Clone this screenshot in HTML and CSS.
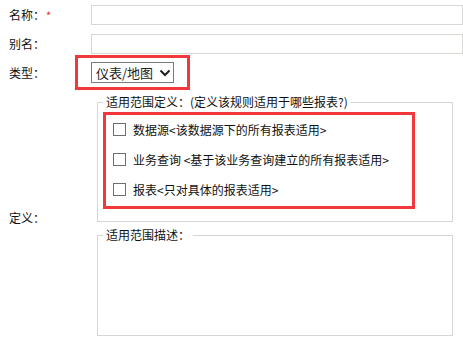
FILE: index.html
```html
<!DOCTYPE html>
<html lang="zh-CN">
<head>
    <meta charset="UTF-8">
    <title>规则定义</title>
    <link rel="stylesheet" href="styles.css">
</head>
<body>
    <div class="form">
        <div class="row">
            <label class="label">名称：<span class="star">*</span></label>
            <input class="text-input" type="text">
        </div>
        <div class="row row-gap">
            <label class="label">别名：</label>
            <input class="text-input" type="text">
        </div>
        <div class="row">
            <label class="label">类型：</label>
            <!-- 红框标注 -->
            <div class="mark mark-type">
                <div class="select">
                    <span>仪表/地图</span>
                    <svg width="12" height="8" viewBox="0 0 12 8"><path d="M1.5 1.5 L6 6 L10.5 1.5" fill="none" stroke="#1f1f1f" stroke-width="2"/></svg>
                </div>
            </div>
        </div>
        <div class="row row-def">
            <label class="label">定义：</label>
            <div class="scope">
                <fieldset class="box">
                    <legend>适用范围定义：(定义该规则适用于哪些报表?)</legend>
                    <div class="mark check-list">
                        <label class="check"><span class="checkbox"></span>数据源&lt;该数据源下的所有报表适用&gt;</label>
                        <label class="check"><span class="checkbox"></span>业务查询 &lt;基于该业务查询建立的所有报表适用&gt;</label>
                        <label class="check"><span class="checkbox"></span>报表&lt;只对具体的报表适用&gt;</label>
                    </div>
                </fieldset>
                <fieldset class="box box-desc">
                    <legend>适用范围描述：</legend>
                    <div class="desc"></div>
                </fieldset>
            </div>
        </div>
    </div>
</body>
</html>
```

FILE: styles.css
```css
/* 基本样式 */
html, body {
    margin: 0;
    background: #fff;
}

body {
    font-family: "Noto Sans CJK SC", "Microsoft YaHei", sans-serif;
    font-size: 12px;
    line-height: 16px;
    color: #111;
}

.form {
    padding-top: 5px;
}

.row {
    display: flex;
    align-items: center;
}

.row-gap {
    margin-top: 9px;
    margin-bottom: 1px;
}

.label {
    width: 91px;
    flex: none;
    padding-left: 9px;
    box-sizing: border-box;
}

.star {
    color: #e8262c;
    font-size: 11px;
    margin-left: 1px;
    vertical-align: top;
}

.text-input {
    box-sizing: border-box;
    width: 372px;
    height: 20px;
    margin: 0;
    border: 1px solid #d8d8d3;
    outline: none;
}

/* 红框标注 */
.mark {
    border: 3px solid #f2383a;
}

.mark-type {
    margin-left: -16px;
    padding: 4px 13px;
}

.select {
    box-sizing: border-box;
    width: 83px;
    height: 21px;
    display: flex;
    align-items: center;
    padding-left: 4px;
    border: 1px solid #7a7a7a;
    font-size: 13px;
    color: #222;
}

.select svg {
    margin-left: 6px;
}

/* 定义区域 */
.scope {
    width: 356px;
    margin-left: 6px;
    padding-top: 4px;
    padding-bottom: 10px;
}

.box {
    margin: 0;
    padding: 0 0 12px 5px;
    border: 1px solid #d6d6d6;
}

.box legend {
    padding: 0 3px;
    line-height: 16px;
    color: #111;
}

.check-list {
    width: 312px;
    box-sizing: border-box;
    margin-top: 2px;
    padding: 8px 0 10px 7px;
    display: flex;
    flex-direction: column;
    gap: 17px;
}

.check {
    display: flex;
    align-items: center;
    height: 13px;
}

.checkbox {
    box-sizing: border-box;
    width: 13px;
    height: 13px;
    margin-right: 7px;
    border: 1px solid #6e6e6e;
    background: #fff;
}

.box-desc {
    margin-top: 5px;
    padding-bottom: 0;
}

.desc {
    height: 92px;
}
```
